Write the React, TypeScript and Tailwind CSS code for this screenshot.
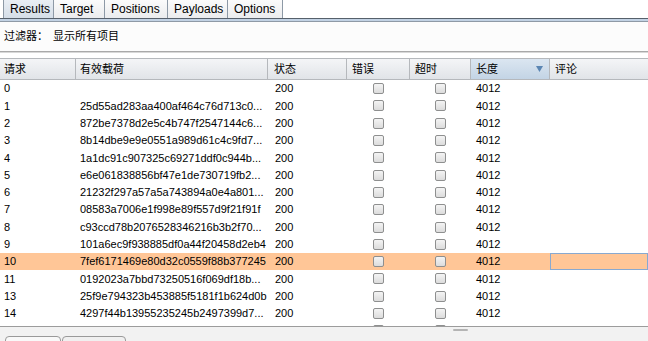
import React from "react";

type Row = { id: string; payload: string };

const rows: Row[] = [
  { id: "0", payload: "" },
  { id: "1", payload: "25d55ad283aa400af464c76d713c0..." },
  { id: "2", payload: "872be7378d2e5c4b747f2547144c6..." },
  { id: "3", payload: "8b14dbe9e9e0551a989d61c4c9fd7..." },
  { id: "4", payload: "1a1dc91c907325c69271ddf0c944b..." },
  { id: "5", payload: "e6e061838856bf47e1de730719fb2..." },
  { id: "6", payload: "21232f297a57a5a743894a0e4a801..." },
  { id: "7", payload: "08583a7006e1f998e89f557d9f21f91f" },
  { id: "8", payload: "c93ccd78b2076528346216b3b2f70..." },
  { id: "9", payload: "101a6ec9f938885df0a44f20458d2eb4" },
  { id: "10", payload: "7fef6171469e80d32c0559f88b377245" },
  { id: "11", payload: "0192023a7bbd73250516f069df18b..." },
  { id: "13", payload: "25f9e794323b453885f5181f1b624d0b" },
  { id: "14", payload: "4297f44b13955235245b2497399d7..." },
  { id: "15", payload: "" },
];

const tabs = ["Results", "Target", "Positions", "Payloads", "Options"];
const tabW = ["w-[51px]", "w-[52px]", "w-[64px]", "w-[61px]", "w-[56px]"];

const Check = () => (
  <div className="w-[11px] h-[11px] rounded-[2px] border border-[#8e8f8f] bg-gradient-to-b from-[#f4f4f4] to-[#dcdcdc]" />
);

export default function App() {
  return (
    <div
      className="w-[648px] h-[341px] overflow-hidden bg-[#f7f7f7] text-[11px] text-black flex flex-col"
      style={{ fontFamily: '"Liberation Sans", "Noto Sans CJK SC", sans-serif' }}
    >
      {/* tabs */}
      <div className="h-[18px] flex pl-[3px] bg-white shrink-0 text-[12px]">
        {tabs.map((t, i) => (
          <div
            key={t}
            className={`${tabW[i]} h-full border-l border-r border-[#8d99a6] -ml-px first:ml-0 flex items-center pl-[6px] ${
              i === 0 ? "bg-gradient-to-b from-[#e9eef4] to-[#d5dee8]" : "bg-gradient-to-b from-[#fbfbfb] to-[#ebecee]"
            }`}
          >
            {t}
          </div>
        ))}
      </div>
      <div className="h-px bg-[#56606b] shrink-0" />
      <div className="h-[2px] bg-[#c2d2e4] shrink-0" />
      <div className="h-px bg-[#8f9aa6] shrink-0" />

      {/* filter */}
      <div className="h-[29px] flex items-center pl-[4px] bg-[#fcfcfc] shrink-0">
        <span>过滤器：</span>
        <span className="ml-[5px]">显示所有项目</span>
      </div>
      <div className="h-px bg-[#a9a9a9] shrink-0" />
      <div className="h-px bg-[#d8d8d8] shrink-0" />
      <div className="h-[5px] bg-white shrink-0" />

      {/* table */}
      <div className="h-[269px] bg-white flex flex-col overflow-hidden shrink-0 border-b border-[#9c9c9c]">
        <div className="h-[22px] flex border-t border-b border-[#b5b8bc] bg-gradient-to-b from-[#f4f5f7] to-[#e1e4e8] shrink-0">
          <div className="w-[76px] border-r border-[#b5b8bc] flex items-center pl-[4px]">请求</div>
          <div className="w-[192px] border-r border-[#b5b8bc] flex items-center pl-[4px]">有效载荷</div>
          <div className="w-[79px] border-r border-[#b5b8bc] flex items-center pl-[6px]">状态</div>
          <div className="w-[63px] border-r border-[#b5b8bc] flex items-center pl-[5px]">错误</div>
          <div className="w-[61px] border-r border-[#b5b8bc] flex items-center pl-[5px]">超时</div>
          <div className="w-[79px] border-r border-[#b5b8bc] flex items-center pl-[5px] pr-[6px] justify-between bg-gradient-to-b from-[#dbe6f1] to-[#c3d4e5]">
            <span>长度</span>
            <svg width="7" height="6" viewBox="0 0 7 6">
              <path d="M0 0H7L3.5 6Z" fill="#5b86b3" />
            </svg>
          </div>
          <div className="flex-1 flex items-center pl-[5px]">评论</div>
        </div>
        {rows.map((r) => {
          const sel = r.id === "10";
          return (
            <div key={r.id} className={`h-[17.3px] flex items-center shrink-0 ${sel ? "bg-[#ffc697]" : ""}`}>
              <div className="w-[76px] pl-[4px]">{r.id === "15" ? "" : r.id}</div>
              <div className="w-[192px] pl-[4px] whitespace-nowrap overflow-hidden">{r.payload}</div>
              <div className="w-[79px] pl-[7px]">{r.id === "15" ? "" : "200"}</div>
              <div className="w-[63px] flex justify-center"><Check /></div>
              <div className="w-[61px] flex justify-center"><Check /></div>
              <div className="w-[79px] pl-[5px]">{r.id === "15" ? "" : "4012"}</div>
              <div className={`flex-1 h-full ${sel ? "border border-[#88a9d0]" : ""}`} />
            </div>
          );
        })}
      </div>

      {/* bottom */}
      <div className="flex-1 relative bg-[#f2f2f2]">
        <div className="absolute left-[453px] top-[2px] w-[15px] h-[2px] rounded-sm bg-[#b4b4b4]" />
        <div className="absolute left-[5px] top-[9px] w-[56px] h-[12px] rounded-t-[4px] border border-[#9a9a9a] bg-[#f9f9f9]" />
        <div className="absolute left-[62px] top-[9px] w-[64px] h-[12px] rounded-t-[4px] border border-[#9a9a9a] bg-[#f0f0f0]" />
      </div>
    </div>
  );
}
